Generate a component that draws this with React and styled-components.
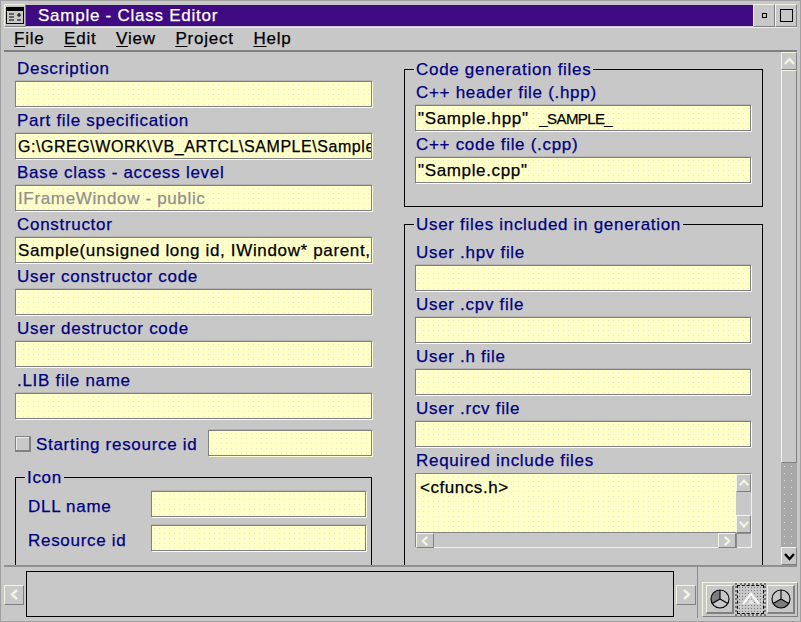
import React from 'react'
import styled, { createGlobalStyle } from 'styled-components'

const GlobalStyle = createGlobalStyle`
  html, body { margin: 0; padding: 0; background: #c8c8c8; }
  body { font-family: "Liberation Sans", Arial, sans-serif; -webkit-text-stroke: 0.25px; }
`

const Window = styled.div`
  width: 801px;
  height: 622px;
  box-sizing: border-box;
  background: #c8c8c8;
  display: flex;
  flex-direction: column;
  border: 1px solid #a0a0a0;
  padding: 3px;
  overflow: hidden;
`

const TitleBar = styled.div`
  height: 23px;
  flex: none;
  display: flex;
  align-items: stretch;
`

const SysIcon = styled.div`
  width: 22px;
  flex: none;
  display: flex;
  align-items: center;
  justify-content: center;
  border: 1px solid #f4f4e4;
  border-right-color: #808080;
  border-bottom-color: #808080;
  box-sizing: border-box;
`

const Caption = styled.div`
  flex: 1;
  background: #3f0a82;
  color: #fff;
  font-size: 17px;
  letter-spacing: 0.75px;
  line-height: 21px;
  padding-left: 12px;
  margin: 1px 0;
`

const WinButton = styled.div`
  width: 22px;
  flex: none;
  box-sizing: border-box;
  display: flex;
  align-items: center;
  justify-content: center;
  border: 1px solid #f4f4e4;
  border-right-color: #808080;
  border-bottom-color: #808080;
`

const WinGlyph = styled.span`
  display: block;
  flex: none;
  box-sizing: border-box;
  width: ${p => p.$size}px;
  height: ${p => p.$size}px;
  border: 1px solid #000;
`

const MenuBar = styled.div`
  height: 25px;
  box-sizing: border-box;
  flex: none;
  display: flex;
  gap: 19.5px;
  align-items: center;
  padding-left: 10px;
  border-bottom: 2px solid #808080;
  border-top: 1px solid #eeeeee;
`

const MenuItem = styled.span`
  font-size: 17px;
  letter-spacing: 0.8px;
  color: #000;
  & u { text-underline-offset: 2px; }
`

const Body = styled.div`
  flex: 1;
  min-height: 0;
  display: flex;
  overflow: hidden;
  border-bottom: 2px solid #909090;
`

const LeftColumn = styled.div`
  width: 357px;
  flex: none;
  margin-left: 11px;
  padding-top: 4px;
`

const RightColumn = styled.div`
  width: 359px;
  flex: none;
  margin-left: 32px;
  padding-top: 17px;
  display: flex;
  flex-direction: column;
  gap: 17px;
`

const Label = styled.div`
  height: 25px;
  line-height: 26px;
  font-size: 17px;
  letter-spacing: 0.7px;
  color: #000080;
  padding-left: ${p => p.$indent || 2}px;
  white-space: nowrap;
`

const Field = styled.div`
  height: 26px;
  margin-bottom: 1px;
  box-sizing: border-box;
  width: ${p => (p.$width ? `${p.$width}px` : 'auto')};
  flex: ${p => (p.$width ? 'none' : 'initial')};
  background-color: #ffffc8;
  background-image: radial-gradient(#e6e6d2 0.5px, transparent 0.7px);
  background-size: 5px 5px;
  border: 1px solid #808080;
  box-shadow: 1px 1px 0 #ffffd8, 0 -1px 0 #b4b4b4;
  color: ${p => (p.$disabled ? '#909090' : '#000')};
  font-size: ${p => (p.$caps ? 16 : 17)}px;
  letter-spacing: ${p => (p.$caps ? 0.55 : 0.65)}px;
  line-height: 26px;
  padding-left: 2px;
  overflow: hidden;
  white-space: pre;
`

const Caps = styled.span`
  font-size: 15px;
  letter-spacing: -0.6px;
`

const CheckRow = styled.div`
  display: flex;
  align-items: center;
  margin-top: 11px;
`

const Checkbox = styled.span`
  width: 13px;
  height: 13px;
  border: 1px solid #808080;
  border-right: 2px solid #808080;
  border-bottom: 2px solid #808080;
  box-shadow: inset 1px 1px 0 #eeeeee;
  margin: 1px 5px 0 0;
  flex: none;
`

const CheckLabel = styled.span`
  font-size: 17px;
  letter-spacing: 0.7px;
  color: #000080;
  width: 172px;
  flex: none;
  padding-top: 3px;
  white-space: nowrap;
`

const Group = styled.div`
  position: relative;
  flex: none;
  box-sizing: border-box;
  border: 1px solid #000;
  height: ${p => p.$height}px;
  margin-top: ${p => p.$top || 0}px;
  padding: ${p => p.$pad || '10px 10px 0 10px'};
`

const Legend = styled.span`
  position: absolute;
  top: -10px;
  left: 9px;
  padding: 0 2px;
  background: #c8c8c8;
  font-size: 17px;
  letter-spacing: 0.7px;
  line-height: 20px;
  color: #000080;
`

const IconRow = styled.div`
  display: flex;
  align-items: center;
  justify-content: space-between;
  height: 34px;
`

const IconLabel = styled.span`
  font-size: 17px;
  letter-spacing: 0.7px;
  color: #000080;
  padding-top: 5px;
`

const ListBox = styled.div`
  display: grid;
  grid-template-columns: 1fr 15px;
  grid-template-rows: 59px 15px;
  width: 337px;
  height: 75px;
  box-sizing: border-box;
  border-top: 1px solid #858585;
  border-left: 1px solid #858585;
  border-right: 1px solid #f4f4e4;
  border-bottom: 1px solid #f4f4e4;
`

const ListText = styled.div`
  background-color: #ffffc8;
  background-image: radial-gradient(#e6e6d2 0.5px, transparent 0.7px);
  background-size: 5px 5px;
  font-size: 17px;
  letter-spacing: 0.55px;
  padding: 4px 0 0 4px;
  border-bottom: 1px solid #858585;
`

const VBar = styled.div`
  display: flex;
  flex-direction: column;
  justify-content: space-between;
`

const HBar = styled.div`
  display: flex;
  justify-content: space-between;
`

const HCorner = styled.div`
  border-left: 1px solid #8c8c8c;
  border-top: 1px solid #8c8c8c;
`

const ArrowBtn = styled.div`
  width: ${p => p.$w}px;
  height: ${p => p.$h}px;
  box-sizing: border-box;
  flex: none;
  display: flex;
  align-items: center;
  justify-content: center;
  border: 1px solid #f4f4e4;
  border-right-color: #808080;
  border-bottom-color: #808080;
`

const MainScroll = styled.div`
  width: 16px;
  flex: none;
  margin-left: 18px;
  display: flex;
  flex-direction: column;
`

const ScrollThumb = styled.div`
  height: 393px;
  box-sizing: border-box;
  border: 1px solid #f4f4e4;
  border-right-color: #808080;
  border-bottom-color: #808080;
  flex: none;
`

const ScrollTrack = styled.div`
  flex: 1;
  background-color: #a8a8a8;
  background-image: radial-gradient(#dcdcdc 0.5px, transparent 0.7px);
  background-size: 7px 7px;
`

const StatusBar = styled.div`
  height: 51px;
  flex: none;
  display: flex;
  align-items: stretch;
  padding-top: 4px;
  box-sizing: border-box;
`

const StatusBox = styled.div`
  width: 648px;
  flex: none;
  box-sizing: border-box;
  border: 1px solid #000;
  margin: 0 2px 1px;
`

const StatusArrow = styled.div`
  align-self: center;
  display: flex;
`

const StatusEnd = styled.div`
  margin-left: 1px;
  padding-left: 4px;
  border-left: 1px solid #8c8c8c;
  display: flex;
  align-items: flex-end;
  margin-top: -4px;
`

const ViewGroup = styled.div`
  display: flex;
  width: 96px;
  height: 35px;
  box-sizing: border-box;
  gap: 3px;
  padding: 2px 2px 2px 3px;
  border: 1px solid #f4f4e4;
  border-right-color: #808080;
  border-bottom-color: #808080;
  margin-bottom: 1px;
`

const ViewButton = styled.div`
  flex: 1;
  display: flex;
  align-items: center;
  justify-content: center;
  box-sizing: border-box;
  border: 1px solid #f4f4e4;
  border-right: 2px solid #808080;
  border-bottom: 2px solid #808080;
  ${p => p.$active && `
    border: 1px dashed #000;
    outline: 2px dotted #777;
    outline-offset: 0;
    background-image: radial-gradient(#777 0.7px, transparent 0.9px);
    background-size: 3px 3px;
  `}
`

const Chevron = ({ dir, color = '#f4f4e4', w = 11, sw = 2.4 }) => {
  const rot = { up: 0, down: 180, left: 270, right: 90 }[dir]
  return (
    <svg width={w} height={w} viewBox="0 0 11 11" style={{ transform: `rotate(${rot}deg)` }}>
      <path d="M1 8 L5.5 3 L10 8" fill="none" stroke={color} strokeWidth={sw} />
    </svg>
  )
}

const SystemIcon = () => (
  <svg width="18" height="17" viewBox="0 0 18 17">
    <rect x="0.5" y="0.5" width="17" height="16" fill="#c8c8c8" stroke="#000" />
    <rect x="1" y="1" width="16" height="3" fill="#000" />
    <path d="M3 7h5M3 10h5M3 13h5M11 8h4M13 6v4M11 13h4" stroke="#000" strokeWidth="1.2" />
  </svg>
)

const Pie = ({ slice }) => {
  const shapes = {
    left: 'M11 11 L11 2 A9 9 0 0 0 3.2 15.5 Z',
    bottom: 'M11 11 L3.2 15.5 A9 9 0 0 0 18.8 15.5 Z',
  }
  return (
    <svg width="22" height="22" viewBox="0 0 22 22">
      <path d={shapes[slice]} fill="#7c7c7c" />
      <circle cx="11" cy="11" r="9" fill="none" stroke="#000" strokeWidth="1.1" />
      <path d="M11 11V2M11 11L3.2 15.5M11 11L18.8 15.5" stroke="#000" strokeWidth="1.1" />
    </svg>
  )
}

const ActivePie = () => (
  <svg width="22" height="22" viewBox="0 0 22 22">
    <path d="M3 15 L11 5 L19 15" fill="none" stroke="#f8f8f8" strokeWidth="2.5" />
    <path d="M11 10 L15 15 L7 15 Z" fill="#e4e4e4" />
  </svg>
)

const leftFields = [
  { label: 'Description', value: '' },
  { label: 'Part file specification', value: 'G:\\GREG\\WORK\\VB_ARTCL\\SAMPLE\\Sample.prt', caps: true },
  { label: 'Base class - access level', value: 'IFrameWindow - public', disabled: true },
  { label: 'Constructor', value: 'Sample(unsigned long id, IWindow* parent, IWindow* owner)' },
  { label: 'User constructor code', value: '' },
  { label: 'User destructor code', value: '' },
  { label: '.LIB file name', value: '' },
]

const userFiles = ['User .hpv file', 'User .cpv file', 'User .h file', 'User .rcv file']

const App = () => (
  <Window>
    <GlobalStyle />
    <TitleBar>
      <SysIcon><SystemIcon /></SysIcon>
      <Caption>Sample - Class Editor</Caption>
      <WinButton><WinGlyph $size={5} /></WinButton>
      <WinButton><WinGlyph $size={13} /></WinButton>
    </TitleBar>
    <MenuBar>
      <MenuItem><u>F</u>ile</MenuItem>
      <MenuItem><u>E</u>dit</MenuItem>
      <MenuItem><u>V</u>iew</MenuItem>
      <MenuItem><u>P</u>roject</MenuItem>
      <MenuItem><u>H</u>elp</MenuItem>
    </MenuBar>
    <Body>
      <LeftColumn>
        {leftFields.map(f => (
          <div key={f.label}>
            <Label>{f.label}</Label>
            <Field $disabled={f.disabled} $caps={f.caps}>{f.value}</Field>
          </div>
        ))}
        <CheckRow>
          <Checkbox />
          <CheckLabel>Starting resource id</CheckLabel>
          <Field $width={164} />
        </CheckRow>
        <Group $height={110} $top={20} $pad="9px 5px 0 12px">
          <Legend>Icon</Legend>
          <IconRow>
            <IconLabel>DLL name</IconLabel>
            <Field $width={215} />
          </IconRow>
          <IconRow>
            <IconLabel>Resource id</IconLabel>
            <Field $width={215} />
          </IconRow>
        </Group>
      </LeftColumn>
      <RightColumn>
        <Group $height={138}>
          <Legend>Code generation files</Legend>
          <Label $indent={1}>C++ header file (.hpp)</Label>
          <Field $width={336}>{'"Sample.hpp"  '}<Caps>_SAMPLE_</Caps></Field>
          <Label $indent={1}>C++ code file (.cpp)</Label>
          <Field $width={336}>{'"Sample.cpp"'}</Field>
        </Group>
        <Group $height={360} $pad="15px 10px 0 10px">
          <Legend>User files included in generation</Legend>
          {userFiles.map(name => (
            <div key={name}>
              <Label $indent={1}>{name}</Label>
              <Field $width={336} />
            </div>
          ))}
          <Label $indent={1}>Required include files</Label>
          <ListBox>
            <ListText>{'<cfuncs.h>'}</ListText>
            <VBar>
              <ArrowBtn $w={15} $h={18}><Chevron dir="up" w={10} /></ArrowBtn>
              <ArrowBtn $w={15} $h={18}><Chevron dir="down" w={10} /></ArrowBtn>
            </VBar>
            <HBar>
              <ArrowBtn $w={18} $h={15}><Chevron dir="left" w={10} /></ArrowBtn>
              <ArrowBtn $w={18} $h={15}><Chevron dir="right" w={10} /></ArrowBtn>
            </HBar>
            <HCorner />
          </ListBox>
        </Group>
      </RightColumn>
      <MainScroll>
        <ArrowBtn $w={16} $h={18}><Chevron dir="up" /></ArrowBtn>
        <ScrollThumb />
        <ScrollTrack />
        <ArrowBtn $w={16} $h={18}><Chevron dir="down" color="#000" /></ArrowBtn>
      </MainScroll>
    </Body>
    <StatusBar>
      <StatusArrow><ArrowBtn $w={20} $h={20}><Chevron dir="left" /></ArrowBtn></StatusArrow>
      <StatusBox />
      <StatusArrow><ArrowBtn $w={20} $h={20}><Chevron dir="right" /></ArrowBtn></StatusArrow>
      <StatusEnd>
        <ViewGroup>
          <ViewButton><Pie slice="left" /></ViewButton>
          <ViewButton $active><ActivePie /></ViewButton>
          <ViewButton><Pie slice="bottom" /></ViewButton>
        </ViewGroup>
      </StatusEnd>
    </StatusBar>
  </Window>
)

export default App
